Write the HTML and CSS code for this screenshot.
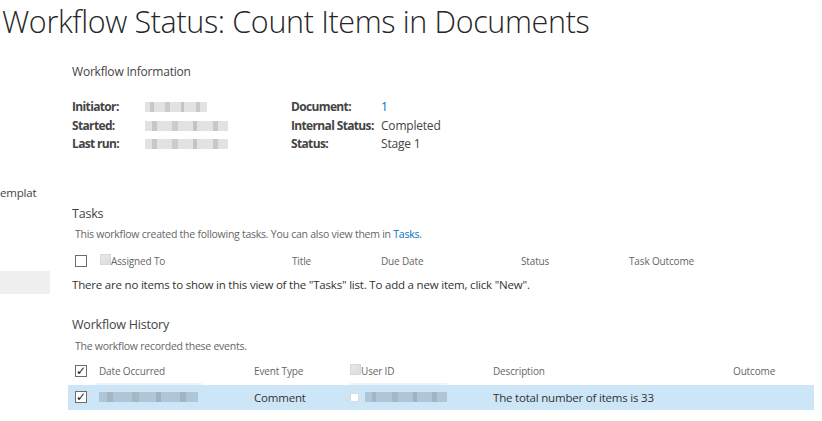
FILE: index.html
```html
<!DOCTYPE html>
<html>
<head>
<meta charset="utf-8">
<link rel="stylesheet" href="styles.css">
</head>
<body>
<h1 class="title">Workflow Status: Count Items in Documents</h1>
<div class="layout">
  <nav class="nav">
    <div class="nav-text">emplat</div>
    <div class="nav-box"></div>
  </nav>
  <main class="main">
    <h2 class="section first">Workflow Information</h2>
    <div class="info">
      <div class="lbl">Initiator:</div><div class="val"><span class="blur b1"></span></div>
      <div class="lbl">Document:</div><div class="val"><a class="link">1</a></div>
      <div class="lbl">Started:</div><div class="val"><span class="blur b2"></span></div>
      <div class="lbl">Internal Status:</div><div class="val">Completed</div>
      <div class="lbl">Last run:</div><div class="val"><span class="blur b3"></span></div>
      <div class="lbl">Status:</div><div class="val">Stage 1</div>
    </div>

    <h2 class="section tasks">Tasks</h2>
    <p class="desc">This workflow created the following tasks. You can also view them in <a class="link">Tasks</a>.</p>
    <div class="row thead tasks-cols">
      <div class="cell"><span class="cb"></span></div>
      <div class="cell"><span class="cb-dis"></span>Assigned To</div>
      <div class="cell">Title</div>
      <div class="cell">Due Date</div>
      <div class="cell">Status</div>
      <div class="cell">Task Outcome</div>
    </div>
    <p class="empty">There are no items to show in this view of the "Tasks" list. To add a new item, click "New".</p>

    <h2 class="section hist">Workflow History</h2>
    <p class="desc hdesc">The workflow recorded these events.</p>
    <div class="row thead hthead hist-cols">
      <div class="cell"><span class="cb checked">✓</span></div>
      <div class="cell"><span class="hline h1">Date Occurred</span></div>
      <div class="cell">Event Type</div>
      <div class="cell"><span class="hline h2"><span class="cb-dis"></span>User ID</span></div>
      <div class="cell">Description</div>
      <div class="cell">Outcome</div>
    </div>
    <div class="row sel hist-cols">
      <div class="cell"><span class="cb checked">✓</span></div>
      <div class="cell"><span class="blur b4"></span></div>
      <div class="cell">Comment</div>
      <div class="cell"><span class="cb-small"></span><span class="blur b5"></span></div>
      <div class="cell">The total number of items is 33</div>
      <div class="cell"></div>
    </div>
  </main>
</div>
</body>
</html>
```
FILE: styles.css
```css
* { box-sizing: border-box; }
body {
  margin: 0;
  font-family: "Open Sans", "Noto Sans", sans-serif;
  color: #444;
  background: #fff;
}
.title {
  margin: 0 0 -4px 0;
  padding: 0 0 0 2px;
  font-size: 30.5px;
  font-weight: 300;
  line-height: 42px;
  color: #262626;
  letter-spacing: -0.35px;
}
.layout {
  display: grid;
  grid-template-columns: 50px 1fr;
  column-gap: 18px;
}
.nav { padding-top: 147px; }
.nav-text {
  font-size: 11.5px;
  letter-spacing: -0.2px;
  color: #444;
  line-height: 16px;
  white-space: nowrap;
}
.nav-box {
  margin-top: 70px;
  height: 23px;
  background: #f0f0f0;
}
.main { padding-top: 26px; }
.section {
  margin: 0 0 0 4px;
  font-size: 12px;
  font-weight: 400;
  line-height: 16px;
  color: #444;
  letter-spacing: -0.2px;
}
.tasks { margin-top: 52px; font-size: 12.5px; }
.hist { margin-top: 24px; font-size: 12.5px; }
.info {
  display: grid;
  grid-template-columns: 73px 146px 90px 1fr;
  margin: 18px 0 0 4px;
  font-size: 12px;
  line-height: 18.5px;
}
.lbl { font-weight: 700; color: #444; letter-spacing: -0.65px; }
.val { display: flex; align-items: center; color: #444; letter-spacing: -0.2px; }
.link { color: #0072c6; text-decoration: none; }
.blur {
  display: inline-block;
  height: 10px;
  background:
    linear-gradient(90deg, transparent 0 8%, rgba(150,150,150,.35) 8% 14%, transparent 14% 33%, rgba(150,150,150,.3) 33% 40%, transparent 40% 58%, rgba(140,140,140,.35) 58% 63%, transparent 63% 82%, rgba(140,140,140,.3) 82% 88%, transparent 88%),
    #e2e2e2;
}
.b1 { width: 62px; }
.b2 { width: 83px; }
.b3 { width: 83px; }
.b4 { width: 99px; background-color: #aec6d8; }
.b5 { width: 82px; background-color: #aec6d8; }
.desc {
  margin: 5px 0 0 7px;
  font-size: 10.5px;
  line-height: 14px;
  color: #666;
  letter-spacing: -0.25px;
}
.hdesc { margin-top: 6px; }
.row {
  display: grid;
  align-items: center;
  width: 746px;
}
.thead {
  height: 25px;
  margin-top: 8px;
  font-size: 10px;
  color: #666;
  letter-spacing: -0.15px;
}
.hthead { height: 27px; margin-top: 5px; }
.tasks-cols { grid-template-columns: 32px 192px 89px 140px 108px 1fr; }
.hist-cols { grid-template-columns: 31px 155px 96px 143px 240px 1fr; }
.cell { padding-left: 0; white-space: nowrap; display: flex; align-items: center; height: 100%; }
.row .cell:first-child { padding-left: 7px; }
.cb {
  display: inline-block;
  width: 12px;
  height: 12px;
  border: 1px solid #6d6d6d;
  background: #fff;
  position: relative;
}
.cb.checked {
  font-size: 12px;
  line-height: 10px;
  text-align: center;
  color: #111;
  font-weight: 700;
  font-family: "DejaVu Sans", sans-serif;
  overflow: visible;
}
.cb-dis {
  display: inline-block;
  width: 11px;
  height: 11px;
  border: 1px solid #d8d8d8;
  background: linear-gradient(135deg, #e9e9e9, #dcdcdc);
  margin-top: -3px;
}
.cb-small {
  display: inline-block;
  width: 9px;
  height: 9px;
  background: #fff;
  border: 1px solid #d5dde3;
  margin-right: 6px;
}
.hline {
  display: flex;
  align-items: center;
  height: 100%;
  border-bottom: 2px solid #edf4fa;
  padding-top: 2px;
  width: 107px;
  margin-left: -4px;
  padding-left: 4px;
}
.hline.h2 { width: 97px; margin-left: 0; padding-left: 0; }
.empty {
  margin: 3px 0 0 4px;
  font-size: 11.5px;
  line-height: 16px;
  color: #333;
  letter-spacing: -0.2px;
}
.sel {
  height: 25px;
  background: #cde6f7;
  font-size: 11.5px;
  color: #333;
  letter-spacing: -0.2px;
}
```
